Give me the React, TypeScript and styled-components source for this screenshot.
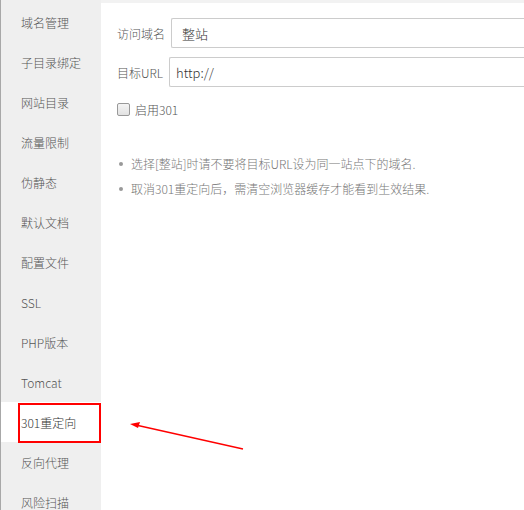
import styled, { createGlobalStyle } from 'styled-components'

const GlobalStyle = createGlobalStyle`
  html, body {
    margin: 0;
    padding: 0;
    background: #fff;
  }
  body {
    font-family: "Noto Sans CJK SC", "Noto Sans", sans-serif;
    font-size: 12px;
    font-weight: 300;
    color: #555;
  }
`;

const Page = styled.div`
  position: relative;
  display: flex;
  width: 524px;
  height: 510px;
  overflow: hidden;
`;

const Sidebar = styled.ul`
  width: 100px;
  flex-shrink: 0;
  margin: 0;
  padding: 2px 0 0;
  list-style: none;
  background: #efefef;
  border-left: 1px solid #a8a8a8;
`;

const NavItem = styled.li<{ $active?: boolean }>`
  position: relative;
  height: 40px;
  display: flex;
  align-items: center;
  padding-left: 20px;
  font-size: 12px;
  color: ${p => (p.$active ? '#333' : '#555')};
  background: ${p => (p.$active ? '#fff' : 'transparent')};
`;

const Highlight = styled.span`
  position: absolute;
  left: 17px;
  right: 0;
  top: 1px;
  bottom: -1px;
  border: 2px solid #f00;
`;

const Content = styled.div`
  flex: 1;
  border-top: 3px solid #f2f2f2;
  padding: 15px 0 0 16px;
`;

const FormRow = styled.div`
  display: flex;
  align-items: center;
  gap: 6px;
  margin-bottom: 9px;
`;

const Label = styled.span`
  font-size: 12px;
  color: #555;
  white-space: nowrap;
`;

const Input = styled.div<{ $indent: number }>`
  flex: 1;
  height: 28px;
  display: flex;
  align-items: center;
  padding-left: ${p => p.$indent}px;
  border: 1px solid #ccc;
  border-right: none;
  border-radius: 2px 0 0 2px;
  font-size: 13px;
  color: #333;
`;

const CheckRow = styled.label`
  display: flex;
  align-items: center;
  gap: 5px;
  height: 20px;
  margin-top: 12px;
  font-size: 12px;
  color: #555;
`;

const Box = styled.span`
  width: 11px;
  height: 11px;
  border: 1px solid #999;
  border-radius: 2px;
  background: linear-gradient(#f4f4f4, #e2e2e2);
`;

const Tips = styled.ul`
  margin: 32px 0 0;
  padding: 0;
  list-style: none;
`;

const Tip = styled.li`
  display: flex;
  align-items: center;
  height: 25px;
  font-size: 12px;
  color: #777;
  &::before {
    content: '';
    width: 4px;
    height: 4px;
    border-radius: 50%;
    background: #999;
    margin: 0 8px 0 2px;
  }
`;

const Arrow = styled.svg`
  position: absolute;
  left: 0;
  top: 0;
  pointer-events: none;
`;

const navs = ['域名管理', '子目录绑定', '网站目录', '流量限制', '伪静态', '默认文档', '配置文件', 'SSL', 'PHP版本', 'Tomcat', '301重定向', '反向代理', '风险扫描'];

export default function App() {
  return (
    <Page>
      <GlobalStyle />
      <Sidebar>
        {navs.map(n => (
          <NavItem key={n} $active={n === '301重定向'}>
            {n}
            {n === '301重定向' && <Highlight />}
          </NavItem>
        ))}
      </Sidebar>
      <Content>
        <FormRow>
          <Label>访问域名</Label>
          <Input $indent={10}>整站</Input>
        </FormRow>
        <FormRow>
          <Label>目标URL</Label>
          <Input $indent={6}>http://</Input>
        </FormRow>
        <CheckRow>
          <Box />
          启用301
        </CheckRow>
        <Tips>
          <Tip>选择[整站]时请不要将目标URL设为同一站点下的域名.</Tip>
          <Tip>取消301重定向后，需清空浏览器缓存才能看到生效结果.</Tip>
        </Tips>
      </Content>
      <Arrow width="524" height="510">
        <line x1="243" y1="449" x2="138" y2="425.5" stroke="#f00" strokeWidth="1.3" />
        <polygon points="130,424 140,422 138,428" fill="#f00" />
      </Arrow>
    </Page>
  );
}
